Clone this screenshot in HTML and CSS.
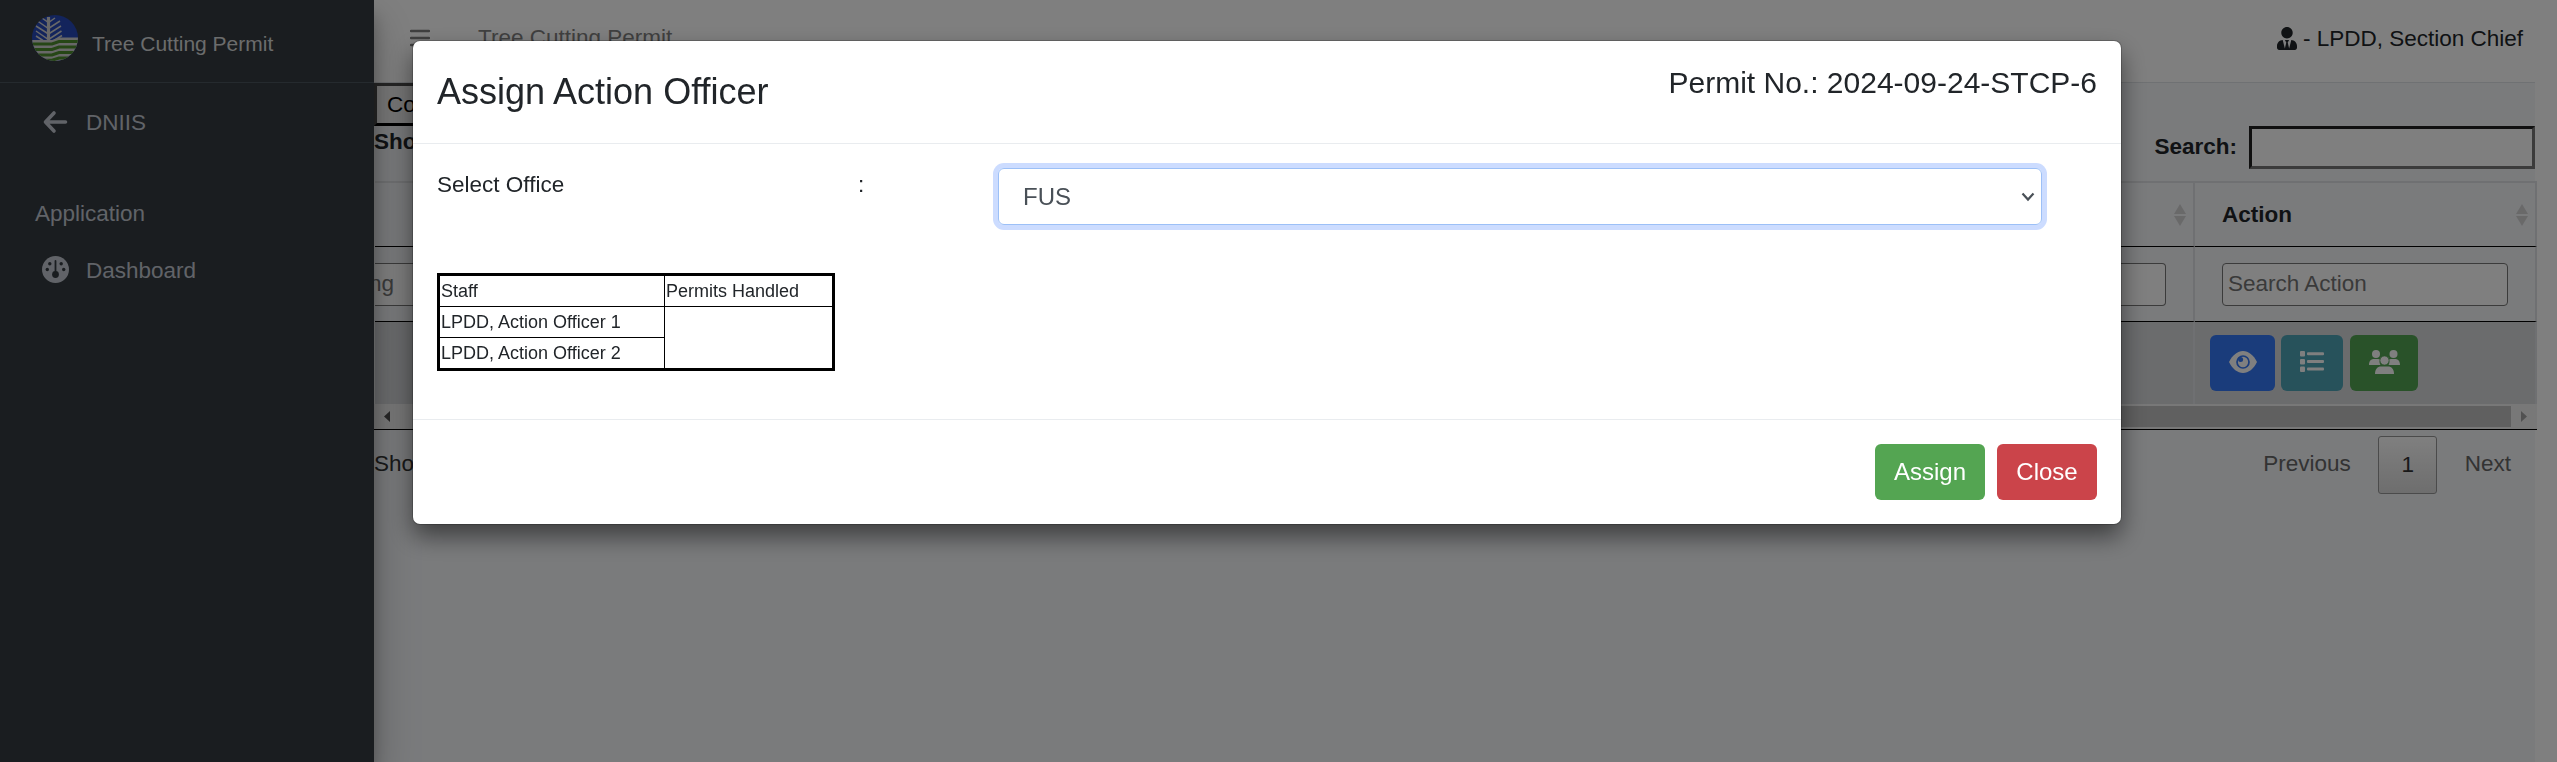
FILE: index.html
```html
<!DOCTYPE html>
<html lang="en">
<head>
<meta charset="utf-8">
<title>Tree Cutting Permit</title>
<link rel="stylesheet" href="styles.css">
</head>
<body>
<div class="app">
  <aside class="sidebar">
    <div class="brand">
      <svg class="logo" viewBox="0 0 46 46">
        <defs><clipPath id="disc"><circle cx="23" cy="23" r="23"/></clipPath></defs>
        <g clip-path="url(#disc)">
          <rect width="46" height="46" fill="#2648b8"/>
          <path d="M0 25H20L27 22.500H46V46H0Z" fill="#d0d0d0"/>
          <g fill="none" stroke="#4c8c2c" stroke-width="3">
            <path d="M0 29H20L27 26.500H46"/><path d="M0 34.500H20L27 32H46"/><path d="M0 40H20L27 37.500H46"/><path d="M0 45.300H20L27 43H46"/>
          </g>
          <g fill="none" stroke="#d0d0d0" stroke-width="1.500">
            <path d="M16.500 2V26" stroke-width="3.200"/>
            <path d="M10 3l6.500 4.500L23 3M5.500 6l11 7.500L28 6M4 11l12.500 8L29 11M4 16l12.500 8.500L29.500 16M4 21l7 4.500M22 25.500L30 20.500"/>
          </g>
        </g>
      </svg>
      <span class="brand-name">Tree Cutting Permit</span>
    </div>
    <nav class="nav">
      <a class="nav-item nav-back">
        <svg class="nav-icon" viewBox="0 0 27 27"><path d="M12 5L3.500 14l8.500 9M4.500 14H23.500" fill="none" stroke="#c2c7d0" stroke-width="3.600" stroke-linecap="round" stroke-linejoin="round"/></svg>
        <span>DNIIS</span>
      </a>
      <div class="nav-head">Application</div>
      <a class="nav-item">
        <svg class="nav-icon" viewBox="0 0 27 27"><circle cx="13.500" cy="13.500" r="13.500" fill="#c2c7d0"/><g fill="#343a40"><circle cx="7.800" cy="7.800" r="1.700"/><circle cx="19.200" cy="7.800" r="1.700"/><circle cx="5.300" cy="13.500" r="1.700"/><circle cx="21.700" cy="13.500" r="1.700"/><circle cx="13.500" cy="18.500" r="3.400"/><rect x="12.600" y="4" width="1.800" height="13" rx=".9"/></g></svg>
        <span>Dashboard</span>
      </a>
    </nav>
  </aside>
  <main class="main">
    <header class="topbar">
      <svg class="burger" viewBox="0 0 20 18"><path d="M1 2H19M1 9H19M1 16H19" stroke="#7f7f7f" stroke-width="2.400" stroke-linecap="round"/></svg>
      <span class="crumb">Tree Cutting Permit</span>
      <div class="user">
        <svg class="user-icon" viewBox="0 0 448 512"><path fill="#212529" d="M224 256c70.700 0 128-57.300 128-128S294.700 0 224 0 96 57.300 96 128s57.300 128 128 128zm95.800 32.600L272 480l-32-136 32-56h-96l32 56-32 136-47.800-191.400C56.900 292 0 350.300 0 422.400V464c0 26.500 21.500 48 48 48h352c26.500 0 48-21.500 48-48v-41.600c0-72.100-56.900-130.400-128.200-133.800z"/></svg>
        <span>- LPDD, Section Chief</span>
      </div>
    </header>
    <section class="content">
      <div class="tools">
        <div class="tools-left">
          <button class="col-btn">Co</button>
          <b class="length">Sho</b>
        </div>
        <label class="search"><b>Search:</b><input class="search-input" type="text"></label>
      </div>
      <div class="grid">
        <div class="cell head sortable"><svg class="sort" viewBox="0 0 12 22"><path d="M6 0L12 10H0ZM0 12H12L6 22Z" fill="#d3d3d3"/></svg></div>
        <div class="cell head action-head"><span>Action</span><svg class="sort" viewBox="0 0 12 22"><path d="M6 0L12 10H0ZM0 12H12L6 22Z" fill="#d3d3d3"/></svg></div>
        <div class="cell filter filter-wide"><div class="filter-box cut"><span>ng</span></div></div>
        <div class="cell filter filter-action"><div class="filter-box">Search Action</div></div>
        <div class="cell data"></div>
        <div class="cell data actions">
          <span class="act view"><svg width="28" height="24" viewBox="0 0 28 24"><path d="M0 12C3.500 5 8.500 1 14 1s10.500 4 14 11c-3.500 7-8.500 11-14 11S3.500 19 0 12z" fill="#fff"/><circle cx="14" cy="12" r="6" fill="#fff" stroke="#3478f6" stroke-width="1.700"/><circle cx="11.600" cy="9.600" r="2.500" fill="#3478f6"/></svg></span>
          <span class="act list"><svg width="24" height="22" viewBox="0 0 24 22"><g fill="#fff"><rect width="5" height="5.500" rx="1"/><rect y="8" width="5" height="5.500" rx="1"/><rect y="15.500" width="5" height="5.500" rx="1"/><rect x="7" y="1.300" width="17" height="3" rx="1"/><rect x="7" y="9" width="17" height="3" rx="1"/><rect x="7" y="16.500" width="17" height="3" rx="1"/></g></svg></span>
          <span class="act team"><svg width="31" height="26" viewBox="0 0 31 26"><g fill="#fff"><circle cx="7" cy="5" r="4"/><circle cx="24.500" cy="5" r="4"/><path d="M0 16c0-4 2-6 5-6h4c1 0 1.700.2 2.300.6-.9 2-.9 4 .2 5.400zM31 16c0-4-2-6-5-6h-4c-1 0-1.700.2-2.300.6.9 2 .9 4-.2 5.400z"/><circle cx="15.500" cy="11.500" r="4.600" stroke="#52a552" stroke-width=".8"/><path d="M6 25c0-5 2.500-7.500 6-7.500h7c3.500 0 6 2.500 6 7.500z"/></g></svg></span>
        </div>
      </div>
      <div class="scroll">
        <svg class="arrow" viewBox="0 0 6 11"><path d="M6 0V11L0 5.500Z" fill="#505050"/></svg>
        <div class="thumb"></div>
        <svg class="arrow" viewBox="0 0 6 11"><path d="M0 0V11L6 5.500Z" fill="#a3a3a3"/></svg>
      </div>
      <div class="foot">
        <span class="info">Sho</span>
        <span class="page">Previous</span>
        <span class="page current">1</span>
        <span class="page">Next</span>
      </div>
    </section>
  </main>
</div>
<div class="backdrop">
  <div class="modal">
    <div class="modal-head">
      <h4 class="modal-title">Assign Action Officer</h4>
      <span class="permit">Permit No.: 2024-09-24-STCP-6</span>
    </div>
    <div class="modal-body">
      <div class="field">
        <span class="field-label">Select Office</span>
        <span class="field-colon">:</span>
        <div class="select"><span>FUS</span><svg width="14" height="10" viewBox="0 0 14 10"><path d="M1.500 1.500L7 7.500l5.500-6" fill="none" stroke="#495057" stroke-width="2.200"/></svg></div>
      </div>
      <table class="staff">
        <tr><td>Staff</td><td>Permits Handled</td></tr>
        <tr><td>LPDD, Action Officer 1</td><td rowspan="2"></td></tr>
        <tr><td>LPDD, Action Officer 2</td></tr>
      </table>
    </div>
    <div class="modal-foot">
      <button class="btn assign">Assign</button>
      <button class="btn close">Close</button>
    </div>
  </div>
</div>
</body>
</html>
```
FILE: styles.css
```css
* { box-sizing: border-box; }
body {
  margin: 0;
  height: 762px;
  overflow: hidden;
  background: #fff;
  color: #212529;
  font: 22.5px/34px "Liberation Sans", Arial, sans-serif;
}
button, input { font: inherit; }
svg { display: block; flex: none; }

.app { display: flex; height: 762px; }

/* sidebar */
.sidebar {
  flex: 0 0 374px;
  z-index: 2;
  background: #343a40;
  color: #c2c7d0;
  box-shadow: 0 21px 42px rgba(0,0,0,.25), 0 15px 15px rgba(0,0,0,.22);
}
.brand {
  display: flex;
  height: 83px;
  padding: 15px 0 0 32px;
  gap: 14px;
  border-bottom: 1px solid #4b545c;
}
.logo { width: 46px; height: 46px; }
.brand-name { font-size: 21px; line-height: 30px; padding-top: 14px; color: #d6d8d9; }
.nav { padding-top: 10px; }
.nav-item { display: flex; align-items: center; height: 60px; padding-left: 42px; gap: 17px; }
.nav-icon { width: 27px; height: 27px; margin-bottom: 3px; }
.nav-back .nav-icon { margin-bottom: 4px; }
.nav-head { padding: 44px 0 10px 35px; }

/* top bar */
.main { flex: 1; min-width: 0; padding-right: 22px; }
.topbar {
  display: flex;
  height: 83px;
  padding: 21px 12px 0 36px;
  border-bottom: 1px solid #dee2e6;
}
.burger { width: 20px; height: 18px; margin-top: 8px; }
.crumb { margin-left: 48px; color: #7f7f7f; }
.user { display: flex; margin-left: auto; gap: 6px; padding-top: 1px; }
.user-icon { width: 20px; height: 23px; margin-top: 5px; }

/* content */
.content { height: 679px; background: #f4f6f9; }
.tools { display: flex; justify-content: space-between; height: 98px; }
.tools-left { display: flex; flex-direction: column; align-items: flex-start; }
.col-btn {
  width: 90px;
  height: 43px;
  padding: 0 10px;
  text-align: left;
  line-height: 34px;
  background: #efefef;
  border: 3px solid;
  border-color: #4c4c4c #000 #000 #4c4c4c;
}
.length { line-height: 32px; }
.search { display: flex; gap: 12px; padding-top: 43px; line-height: 42px; }
.search-input {
  width: 286px;
  height: 43px;
  background: #fff;
  border: 3px solid;
  border-color: #212121 #767676 #767676 #212121;
}

/* table */
.grid {
  display: grid;
  grid-template-columns: 1fr 342px;
  grid-template-rows: 66px 75px 81px;
  margin: 0 -2px 0 1px;
  border-top: 2px solid #dfe1e4;
}
.cell { display: flex; align-items: center; border-right: 2px solid #dfe1e4; min-width: 0; }
.grid { grid-template-rows: 64px 75px 82px; }
.head { border-bottom: 1px solid #000; font-weight: bold; justify-content: flex-end; padding-right: 7px; }
.action-head { justify-content: space-between; padding-left: 27px; }
.sort { width: 12px; height: 22px; }
.filter { border-bottom: 1px solid #000; }
.filter-wide { padding-right: 27px; }
.filter-action { padding: 0 27px; }
.filter-box {
  flex: 1;
  height: 43px;
  padding: 0 5px;
  line-height: 40px;
  color: #757575;
  background: #fff;
  border: 1px solid #767676;
  border-radius: 4px;
}
.cut { border-left: 0; border-radius: 0 4px 4px 0; padding: 0; }
.cut span { margin-left: -6px; }
.data { background: #d6d8db; }
.actions { align-items: flex-start; padding: 13px 0 0 15px; }
.act { display: flex; align-items: center; justify-content: center; height: 56px; border-radius: 6px; padding-bottom: 2px; }
.view { width: 65px; background: #3478f6; margin-right: 6px; }
.list { width: 62px; background: #4ea4b7; margin-right: 7px; }
.team { width: 68px; background: #52a552; }
.scroll {
  display: flex;
  align-items: center;
  height: 26px;
  margin: 0 -2px 0 0;
  padding: 0 10px;
  background: #f1f1f1;
  border-bottom: 1px solid #000;
}
.arrow { width: 6px; height: 11px; }
.thumb { flex: 1; height: 21px; margin: 0 10px 0 600px; background: #c1c1c1; }
.foot { display: flex; padding: 6px 24px 0 0; line-height: 56px; height: 64px; }
.info { margin-right: auto; color: #333; line-height: 55px; }
.page { color: #666; }
.current {
  width: 59px;
  height: 58px;
  margin: 0 28px 0 27px;
  padding-left: 1px;
  text-align: center;
  color: #333;
  border: 1px solid #979797;
  border-radius: 3px;
  background: linear-gradient(#fff, #dcdcdc);
}

/* modal */
.backdrop { position: fixed; inset: 0; z-index: 10; padding: 41px 436px 0 413px; background: rgba(0,0,0,.5); }
.modal { height: 483px; display: flex; flex-direction: column; background: #fff; border-radius: 7px; box-shadow: 0 0 0 1px rgba(0,0,0,.2), 0 12px 24px rgba(0,0,0,.5); }
.modal-head { display: flex; justify-content: space-between; height: 103px; padding: 0 24px; border-bottom: 1px solid #e9ecef; }
.modal-title { margin: 0; padding-top: 24px; font-size: 36px; font-weight: 400; line-height: 54px; }
.permit { font-size: 30px; line-height: 36px; padding-top: 24px; }
.modal-body { flex: 1; padding: 24px; }
.field { display: grid; grid-template-columns: 421px 140px 1044px; line-height: 33px; }
.select {
  display: flex;
  align-items: center;
  justify-content: space-between;
  height: 57px;
  padding: 0 6px 0 24px;
  font-size: 24px;
  color: #495057;
  border: 1px solid #9cc0f7;
  border-radius: 6px;
  box-shadow: 0 0 0 5px #ccdcff;
}
.staff { width: 398px; height: 98px; margin-top: 48px; border-collapse: collapse; border: 3px solid #000; font-size: 18px; line-height: 27px; table-layout: fixed; }
.staff td { padding: 2px 1px 1px; border: 1px solid #000; }
.staff td:first-child { width: 226px; }
.modal-foot { display: flex; justify-content: flex-end; gap: 12px; height: 105px; padding: 24px; border-top: 1px solid #e9ecef; }
.btn { height: 56px; padding: 0; border: 0; border-radius: 6px; color: #fff; font-size: 24px; }
.assign { width: 110px; background: #54a552; }
.close { width: 100px; background: #cb444a; }
```
